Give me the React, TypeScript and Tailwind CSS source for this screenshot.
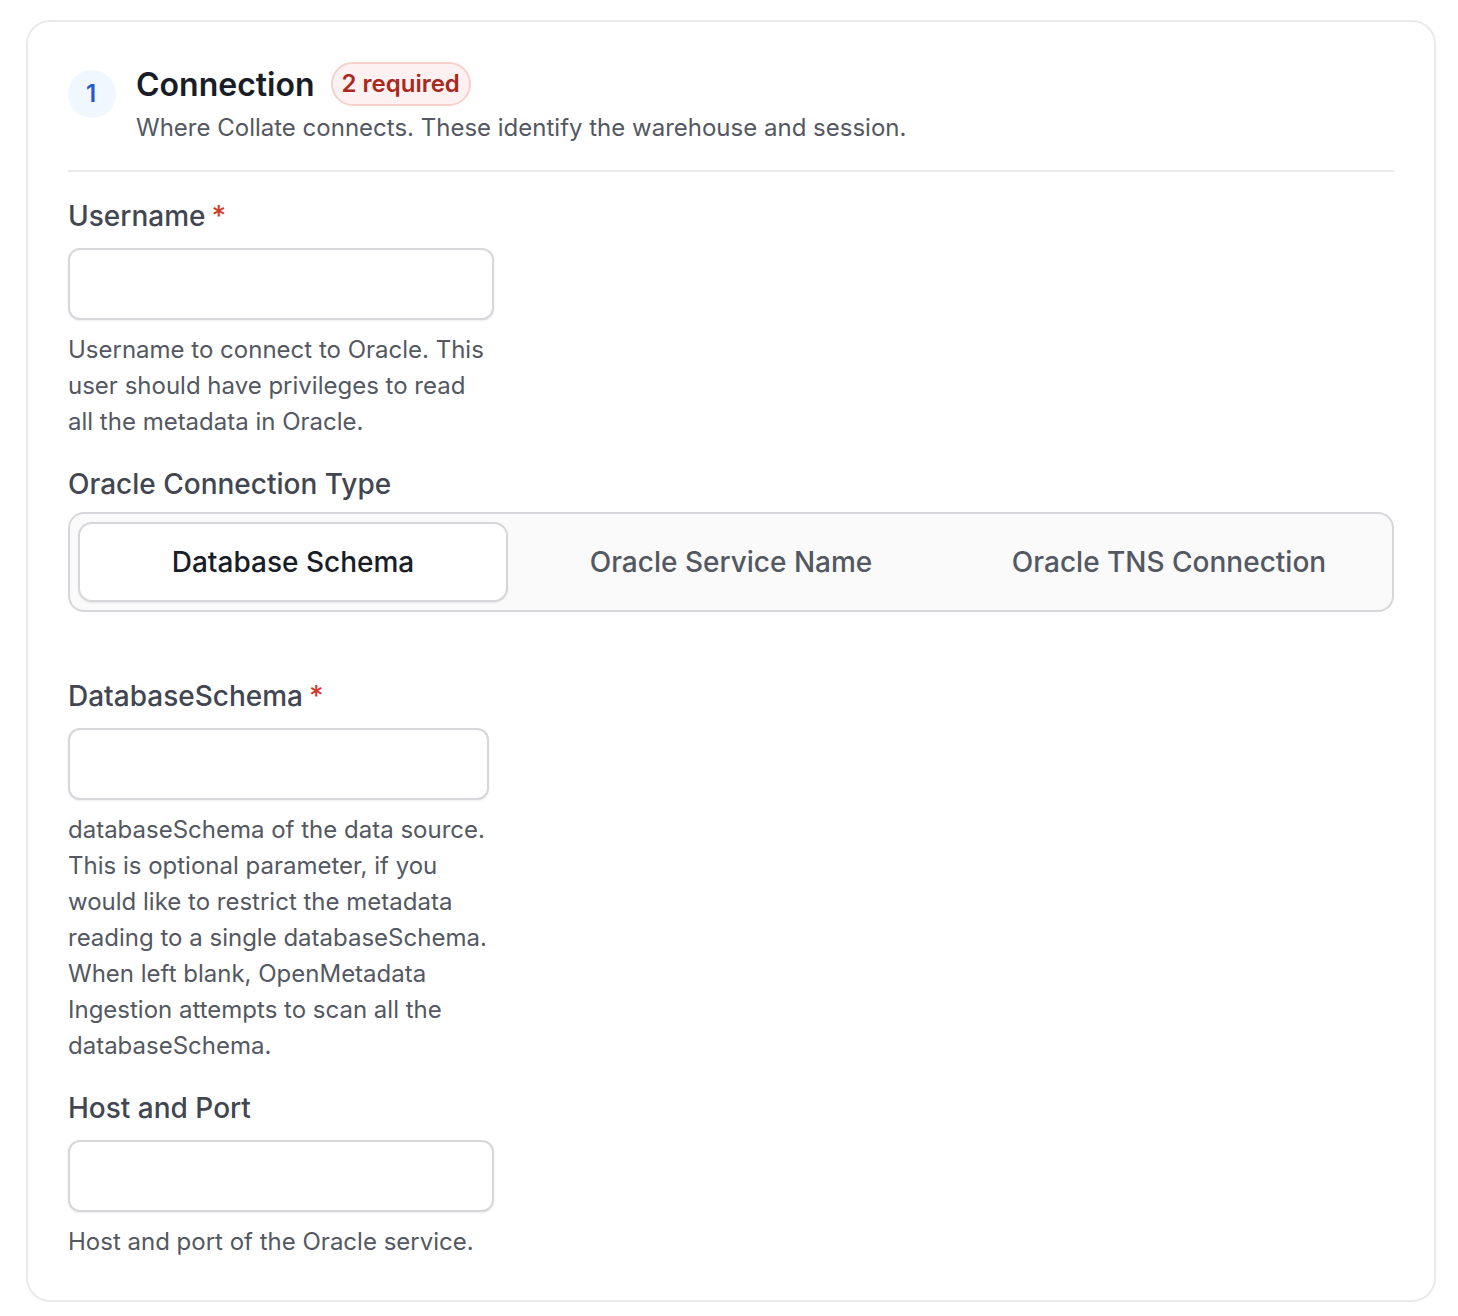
function Label({ text, required }: { text: string; required?: boolean }) {
  return (
    <div className="flex h-9 text-[28px] leading-9 font-medium text-[#414651]">
      <span>{text}</span>
      {required && <span className="ml-1.5 text-[#d13a2a]">*</span>}
    </div>
  );
}

function Field({
  label,
  required,
  help,
  width = "w-[426px]",
}: {
  label: string;
  required?: boolean;
  help: string;
  width?: string;
}) {
  return (
    <div className="w-[426px]">
      <Label text={label} required={required} />
      <input
        className={`${width} mt-[14px] block h-[72px] rounded-[12px] border-2 border-[#d5d7da] bg-white shadow-[0_1px_2px_rgba(10,13,18,0.08)]`}
      />
      <p className="mt-3 text-[24px] leading-9 text-[#535862]">{help}</p>
    </div>
  );
}

const tabs = ["Database Schema", "Oracle Service Name", "Oracle TNS Connection"];

export default function App() {
  return (
    <div className="min-h-[1316px] bg-white pt-5 pr-[22px] pl-[26px] font-['Inter',sans-serif]">
      <div className="h-[1282px] rounded-[24px] border-2 border-[#e9eaeb] px-10 pt-10">
        <div className="flex h-[110px] gap-5 border-b-2 border-[#e9eaeb]">
          <div className="mt-2 flex h-12 w-12 items-center justify-center rounded-full bg-[#f0f7fe] pr-0.5 text-[24px] font-semibold text-[#2559d0]">
            1
          </div>
          <div>
            <div className="flex h-[44px] items-center gap-4">
              <span className="h-[44px] text-[32px] leading-[46px] font-semibold text-[#181d27]">Connection</span>
              <span className="flex h-[44px] items-center rounded-full border-2 border-[#f6d0cb] bg-[#fdf2f1] px-[9px] text-[24px] font-semibold text-[#a82a1f]">
                2 required
              </span>
            </div>
            <p className="mt-1 text-[24px] leading-9 text-[#535862]">
              Where Collate connects. These identify the warehouse and session.
            </p>
          </div>
        </div>

        <div className="mt-[26px]">
          <Field
            label="Username"
            required
            help="Username to connect to Oracle. This user should have privileges to read all the metadata in Oracle."
          />
        </div>

        <div className="mt-[26px]">
          <Label text="Oracle Connection Type" />
          <div className="mt-[10px] grid h-[100px] grid-cols-3 items-center gap-2 rounded-[16px] border-2 border-[#d5d7da] bg-[#fafafa] px-2">
            {tabs.map((tab, i) => (
              <div
                key={tab}
                className={
                  i === 0
                    ? "flex h-20 items-center justify-center rounded-[14px] border-2 border-[#d5d7da] bg-white text-[28px] font-medium text-[#181d27] shadow-[0_1px_2px_rgba(10,13,18,0.08)]"
                    : "flex h-20 items-center justify-center text-[28px] font-medium text-[#535862]"
                }
              >
                {tab}
              </div>
            ))}
          </div>
        </div>

        <div className="mt-[66px]">
          <Field
            label="DatabaseSchema"
            required
            width="w-[421px]"
            help="databaseSchema of the data source. This is optional parameter, if you would like to restrict the metadata reading to a single databaseSchema. When left blank, OpenMetadata Ingestion attempts to scan all the databaseSchema."
          />
        </div>

        <div className="mt-[26px]">
          <Field label="Host and Port" help="Host and port of the Oracle service." />
        </div>
      </div>
    </div>
  );
}
